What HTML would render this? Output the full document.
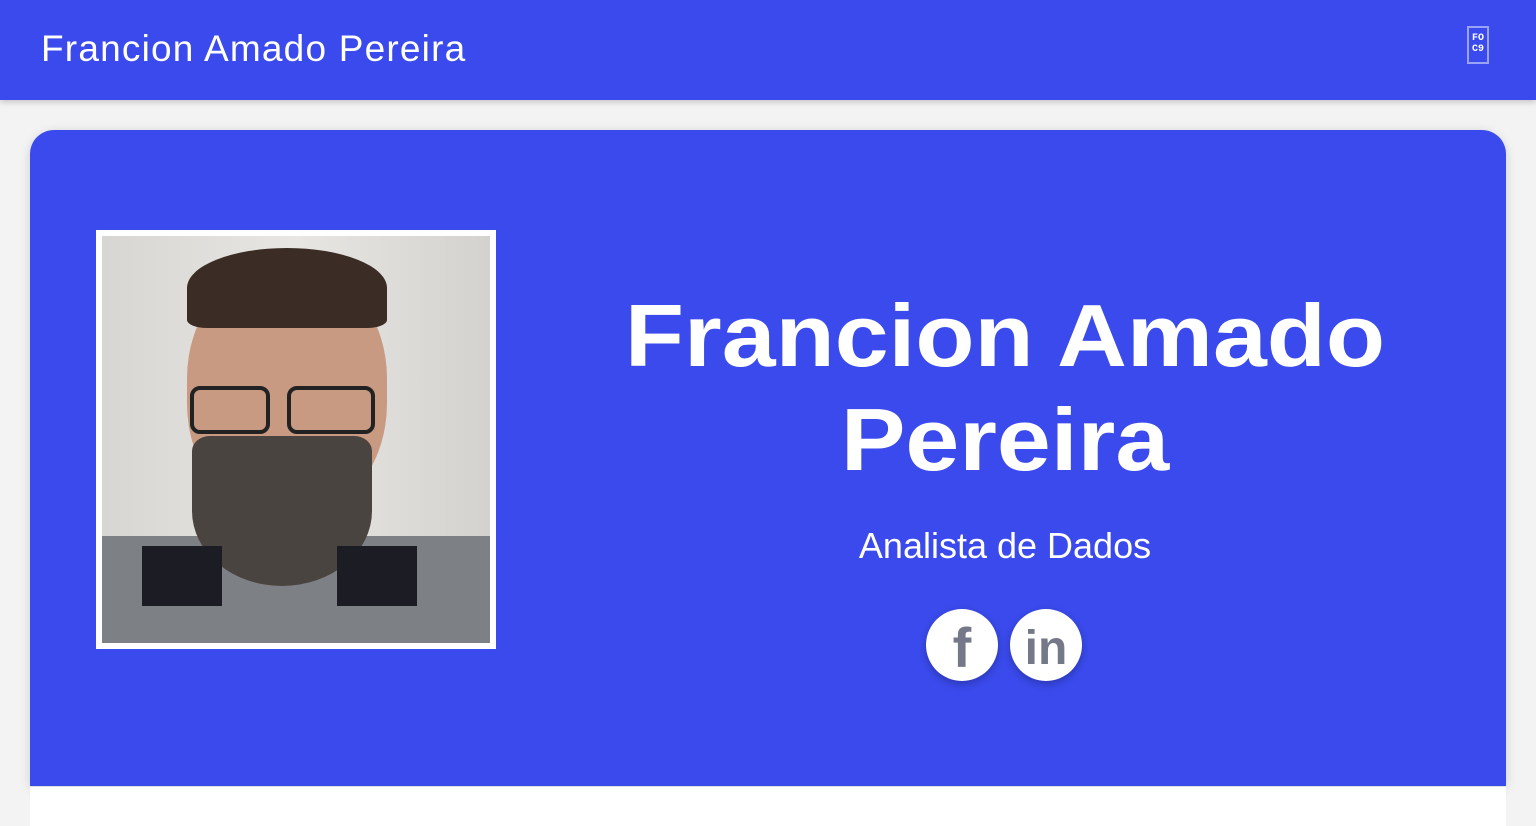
<!DOCTYPE html>
<html><head><style>
*{margin:0;padding:0;box-sizing:border-box}
body{width:1536px;height:823px;overflow:hidden;background:#f3f3f3;font-family:"Liberation Sans",sans-serif}
.hdr{position:absolute;left:0;top:0;width:1536px;height:100px;background:#3a4aec;box-shadow:0 2px 6px rgba(0,0,0,.2)}
.hdr .t{position:absolute;left:41px;top:28px;color:#fff;font-size:37px;letter-spacing:1.2px}
.logo{position:absolute;left:1467px;top:26px;width:22px;height:38px;border:2px solid #9aa3f5;color:#fff;font:bold 10px "Liberation Mono",monospace;line-height:11px;text-align:center;padding-top:5px}
.card{position:absolute;left:30px;top:130px;width:1476px;height:656px;background:#3a4aec;border-radius:24px 24px 0 0;box-shadow:0 2px 10px rgba(0,0,0,.15)}
.white{position:absolute;left:30px;top:786px;width:1476px;height:40px;background:#fff;border-top:1px solid #ddd}
.photo{position:absolute;left:96px;top:230px;width:400px;height:419px;background:#fff;padding:6px}
.ph{width:100%;height:100%;position:relative;overflow:hidden;background:linear-gradient(90deg,#d8d6d3,#e8e6e3 50%,#d4d2cf)}
.name{position:absolute;left:560px;width:890px;top:284px;text-align:center;color:#fff;font-weight:bold;font-size:88px;line-height:104px;transform:scaleX(1.1);transform-origin:445px 0}
.sub{position:absolute;left:560px;width:890px;top:525px;text-align:center;color:#fff;font-size:36px}
.ic{position:absolute;top:609px;width:72px;height:72px;border-radius:50%;background:#fff;box-shadow:0 3px 8px rgba(0,0,0,.25);color:#757888;font-weight:bold;text-align:center}
</style></head><body>
<div class="hdr"><div class="t">Francion Amado Pereira</div><div class="logo">FO<br>C9</div></div>
<div class="card"></div>
<div class="white"></div>
<div class="photo"><div class="ph">
<div style="position:absolute;left:0;top:300px;width:100%;height:120px;background:#7d8186"></div>
<div style="position:absolute;left:85px;top:30px;width:200px;height:250px;border-radius:45%;background:#c89a82"></div>
<div style="position:absolute;left:85px;top:12px;width:200px;height:80px;border-radius:50% 50% 10% 10%;background:#3b2d26"></div>
<div style="position:absolute;left:90px;top:200px;width:180px;height:150px;border-radius:10% 10% 50% 50%;background:#4a4440"></div>
<div style="position:absolute;left:88px;top:150px;width:80px;height:48px;border:4px solid #222;border-radius:10px"></div>
<div style="position:absolute;left:185px;top:150px;width:88px;height:48px;border:4px solid #222;border-radius:10px"></div>
<div style="position:absolute;left:40px;top:310px;width:80px;height:60px;background:#1b1c24"></div>
<div style="position:absolute;left:235px;top:310px;width:80px;height:60px;background:#1b1c24"></div>
</div></div>
<div class="name">Francion Amado<br>Pereira</div>
<div class="sub">Analista de Dados</div>
<div class="ic" style="left:926px;font-size:56px;line-height:78px">f</div>
<div class="ic" style="left:1010px;font-size:48px;line-height:80px">in</div>
</body></html>
